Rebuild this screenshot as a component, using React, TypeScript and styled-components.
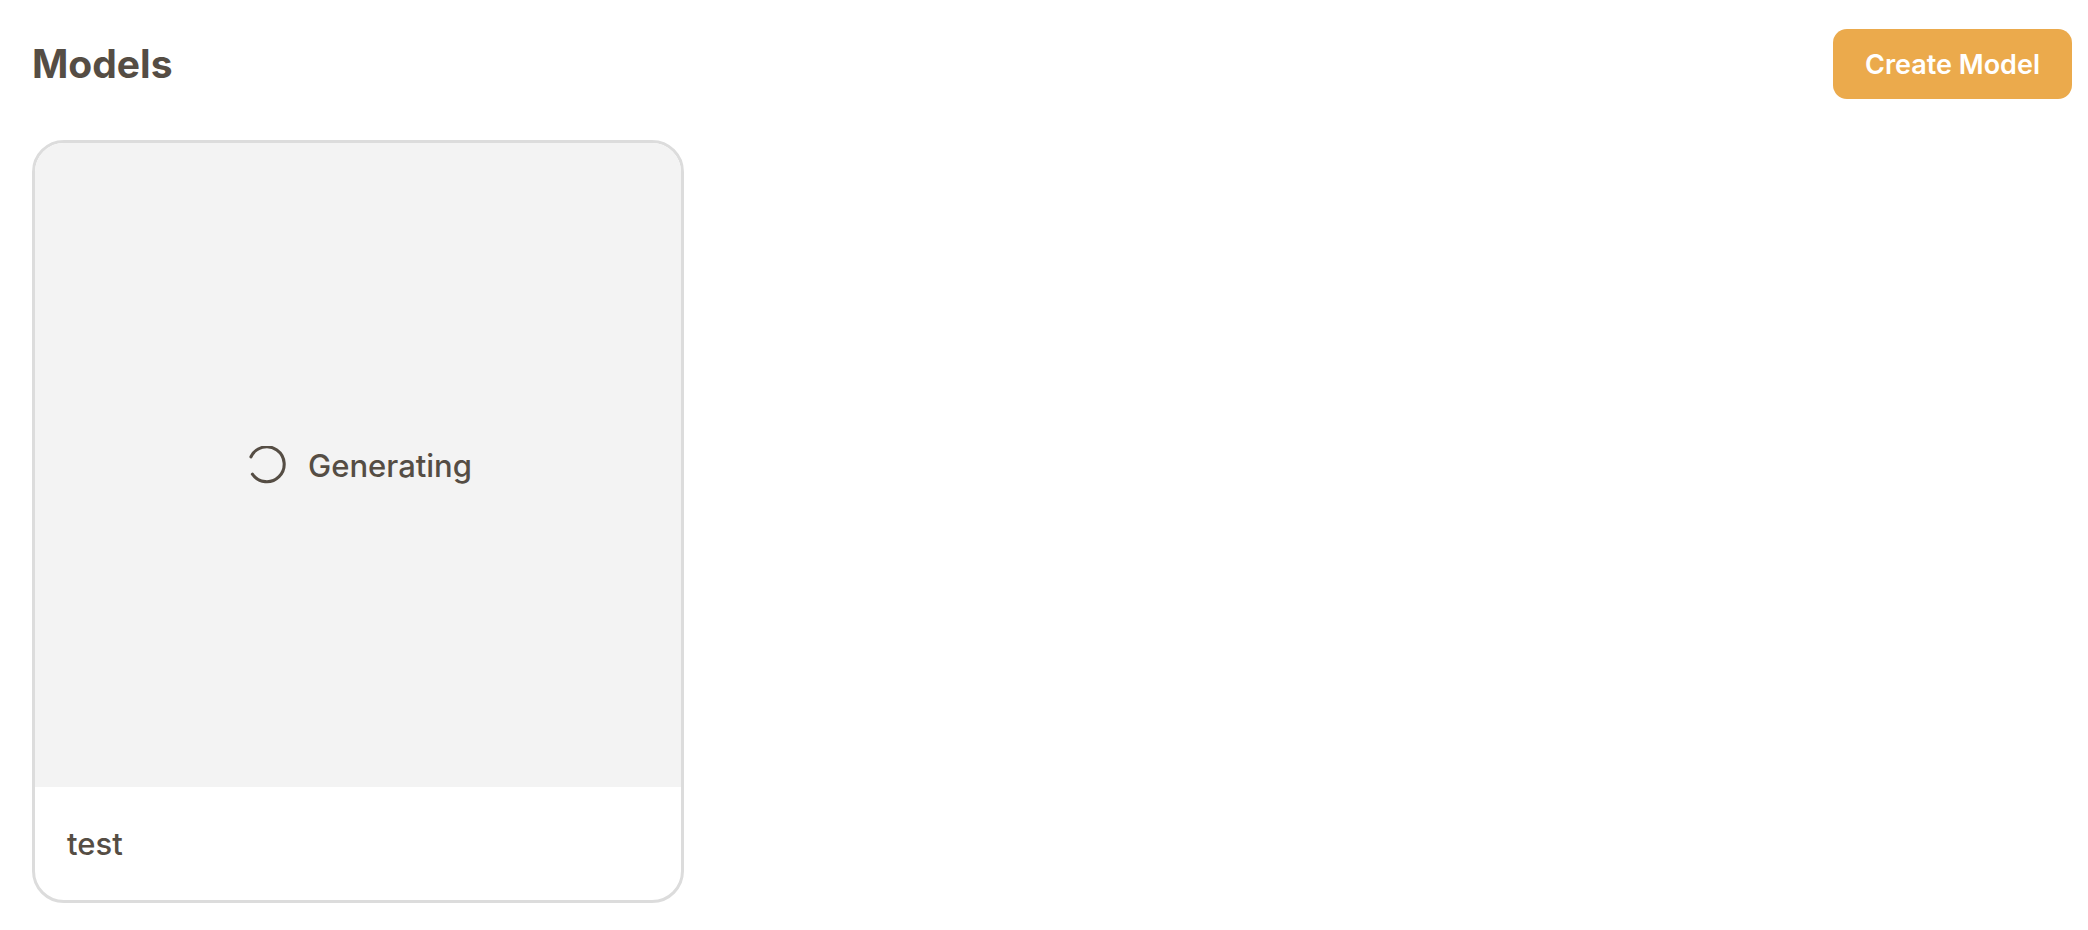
import styled, { createGlobalStyle } from 'styled-components';

const GlobalStyle = createGlobalStyle`
  html, body {
    margin: 0;
    padding: 0;
    background: #ffffff;
  }

  body {
    font-family: Inter, "Noto Sans", sans-serif;
    color: #554d44;
  }
`;

const PageStyled = styled.div`
  padding: 29px 16px 0 32px;
  box-sizing: border-box;
  width: 2088px;
  min-height: 930px;
`;

const HeaderStyled = styled.div`
  display: flex;
  align-items: center;
  justify-content: space-between;
  height: 70px;
  margin-bottom: 41px;
`;

const TitleStyled = styled.h1`
  margin: 0;
  font-size: 39px;
  line-height: 48px;
  font-weight: 700;
  color: #554d44;
`;

const CreateButtonStyled = styled.button`
  height: 70px;
  padding: 0 32px;
  border: none;
  border-radius: 14px;
  background: #ebaa4c;
  color: #ffffff;
  font-family: Inter, "Noto Sans", sans-serif;
  font-size: 27px;
  font-weight: 600;
  cursor: pointer;
`;

const GridStyled = styled.div`
  display: grid;
  grid-template-columns: repeat(auto-fill, 652px);
  gap: 32px;
`;

const CardStyled = styled.div`
  display: flex;
  flex-direction: column;
  height: 763px;
  border: 3px solid #dcdcdc;
  border-radius: 32px;
  overflow: hidden;
  box-sizing: border-box;
  background: #ffffff;
`;

const PreviewStyled = styled.div`
  flex: 1;
  display: flex;
  align-items: center;
  justify-content: center;
  gap: 21px;
  padding-left: 4px;
  background: #f3f3f3;
`;

const StatusTextStyled = styled.span`
  font-size: 31px;
  font-weight: 500;
  color: #554d44;
`;

const FooterStyled = styled.div`
  height: 113px;
  display: flex;
  align-items: center;
  padding: 0 32px;
  font-size: 31px;
  font-weight: 500;
  color: #554d44;
`;

const Spinner = () => (
  <svg width="39" height="39" viewBox="0 0 38 38" fill="none">
    <path
      d="M2.9 10.5 A17 17 0 1 1 4.3 27.5"
      stroke="#554d44"
      strokeWidth="3"
      strokeLinecap="round"
    />
  </svg>
);

interface IModel {
  name: string;
  status: string;
}

const models: IModel[] = [{ name: 'test', status: 'Generating' }];

const ModelCard = ({ model }: { model: IModel }) => (
  <CardStyled>
    <PreviewStyled>
      <Spinner />
      <StatusTextStyled>{model.status}</StatusTextStyled>
    </PreviewStyled>
    <FooterStyled>{model.name}</FooterStyled>
  </CardStyled>
);

const App = () => (
  <>
    <GlobalStyle />
    <PageStyled>
      <HeaderStyled>
        <TitleStyled>Models</TitleStyled>
        <CreateButtonStyled>Create Model</CreateButtonStyled>
      </HeaderStyled>
      <GridStyled>
        {models.map((m) => (
          <ModelCard key={m.name} model={m} />
        ))}
      </GridStyled>
    </PageStyled>
  </>
);

export default App;
